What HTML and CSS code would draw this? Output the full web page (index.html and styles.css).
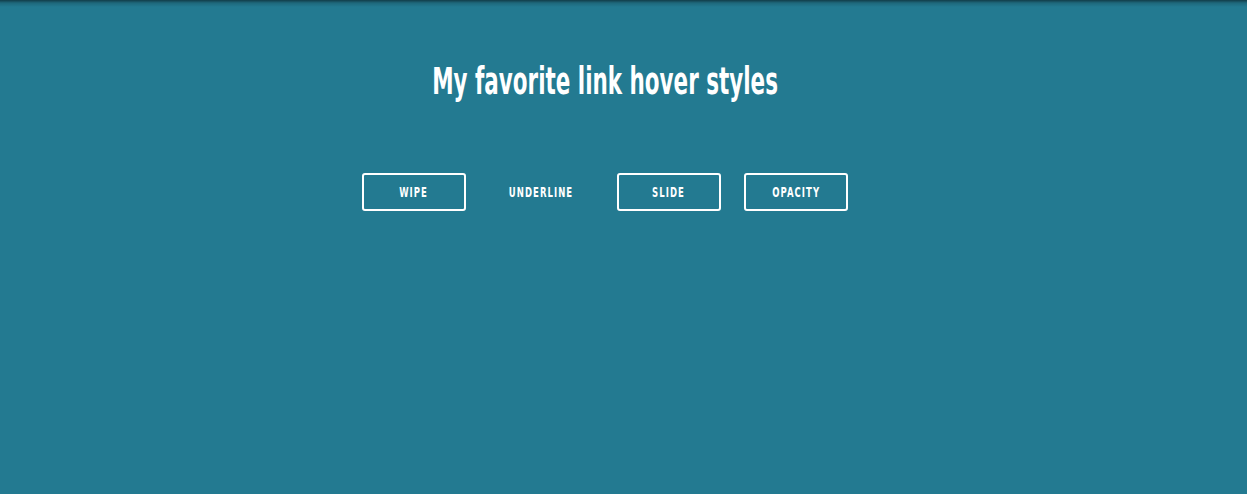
FILE: index.html
```html
<!DOCTYPE html>
<html lang="en">
<head>
<meta charset="utf-8">
<title>Link hover styles</title>
<link rel="stylesheet" href="styles.css">
</head>
<body>
<main class="page">
  <h1 class="title"><span class="title__text">My favorite link hover styles</span></h1>
  <nav class="links">
    <a class="link link--boxed" href="#"><span class="link__text">Wipe</span></a>
    <a class="link" href="#"><span class="link__text">Underline</span></a>
    <a class="link link--boxed" href="#"><span class="link__text">Slide</span></a>
    <a class="link link--boxed" href="#"><span class="link__text">Opacity</span></a>
  </nav>
</main>
</body>
</html>
```
FILE: styles.css
```css
html, body {
  margin: 0;
  height: 100%;
}
body {
  background: linear-gradient(rgba(0, 0, 0, 0.5), rgba(0, 0, 0, 0.15) 3px, rgba(0, 0, 0, 0) 7px) no-repeat, #237a91;
  font-family: "DejaVu Sans Condensed", "DejaVu Sans", sans-serif;
  color: #fff;
}
.page {
  display: flex;
  flex-direction: column;
  align-items: center;
  padding: 60px 37px 0 0;
}
.title {
  margin: 0;
  font-size: 37px;
  font-weight: 700;
  line-height: 44px;
  white-space: nowrap;
}
.title__text {
  display: inline-block;
  transform: scaleX(0.645);
}
.links {
  display: flex;
  gap: 23.5px;
  margin-top: 69px;
}
.link {
  box-sizing: border-box;
  width: 104px;
  height: 38px;
  display: flex;
  align-items: center;
  justify-content: center;
  color: #fff;
  text-decoration: none;
  text-transform: uppercase;
  font-size: 13.5px;
  font-weight: 700;
  letter-spacing: 1.5px;
  border: 2px solid transparent;
  border-radius: 3px;
  white-space: nowrap;
}
.link__text {
  display: inline-block;
  transform: scaleX(0.7);
}
.link--boxed {
  border-color: #fff;
}
```
